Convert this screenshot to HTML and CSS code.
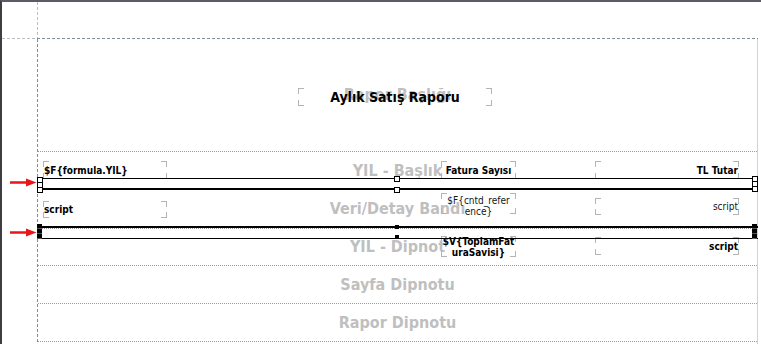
FILE: index.html
```html
<!DOCTYPE html>
<html lang="tr">
<head>
<meta charset="utf-8">
<title>Aylık Satış Raporu</title>
<link rel="stylesheet" href="styles.css">
</head>
<body>
<div class="frame">
  <div class="guide guide-v-out"></div>
  <div class="guide guide-v"></div>
  <div class="guide guide-h-out"></div>
  <div class="guide guide-h"></div>

  <svg class="arrow arrow-a" width="27" height="9" viewBox="0 0 27 9"><path d="M0 3.2H16V0.5L26.5 4.5L16 8.5V5.8H0Z" fill="#e8161b"/></svg>
  <svg class="arrow arrow-b" width="27" height="9" viewBox="0 0 27 9"><path d="M0 3.2H16V0.5L26.5 4.5L16 8.5V5.8H0Z" fill="#e8161b"/></svg>

  <div class="page">
    <section class="band band-title">
      <span class="ghost">Rapor Başlığı</span>
      <div class="field field-title">Aylık Satış Raporu</div>
    </section>

    <section class="band band-r1">
      <span class="ghost">YIL - Başlık</span>
      <div class="field c1 bold r1">$F{formula.YIL}</div>
      <div class="field c2 bold r1 center">Fatura Sayısı</div>
      <div class="field c3 bold r1 right">TL Tutar</div>
    </section>

    <section class="band band-r2">
      <span class="ghost">Veri/Detay Bandı</span>
      <div class="field c1 bold r2a">script</div>
      <div class="field c2 r2b center wrap">$F{cntd_refer<br>ence}</div>
      <div class="field c3 r2c right">script</div>
    </section>

    <section class="band band-r3">
      <span class="ghost">YIL - Dipnot</span>
      <div class="field c2 bold r3b center wrap">$V{ToplamFat<br>uraSavisi}</div>
      <div class="field c3 bold r3c right">script</div>
    </section>

    <section class="band band-plain">
      <span class="ghost">Sayfa Dipnotu</span>
    </section>

    <section class="band band-plain">
      <span class="ghost">Rapor Dipnotu</span>
    </section>

    <div class="sel sel-a">
      <div class="hline thin"></div>
      <div class="hline thick"></div>
      <div class="handles h-left"><i></i><i></i><i></i></div>
      <div class="handle h-mid1"></div>
      <div class="handle h-mid2"></div>
      <div class="handles h-right"><i></i><i></i><i></i></div>
    </div>

    <div class="sel sel-b">
      <div class="hline thick"></div>
      <div class="hline thin"></div>
      <div class="handles filled h-left"><i></i><i></i><i></i></div>
      <div class="dot d1"></div>
      <div class="dot d2"></div>
      <div class="handles filled h-right"><i></i><i></i><i></i></div>
    </div>
  </div>
</div>
</body>
</html>
```

FILE: styles.css
```css
* { box-sizing: border-box; }

html, body {
  margin: 0;
  padding: 0;
  background: #ffffff;
}

body {
  font-family: "DejaVu Sans Condensed", "DejaVu Sans", sans-serif;
  color: #000;
}

.frame {
  position: relative;
  width: 761px;
  height: 344px;
  overflow: hidden;
  border-top: 2px solid #5c5c64;
  border-left: 2px solid #3e3e42;
  padding: 37px 0 0 36px;
  background: #fff;
}

.guide { position: absolute; }

.guide-v-out {
  left: 35px; top: 0; width: 1px; height: 37px;
  background: repeating-linear-gradient(to bottom, #b9bfc3 0 3px, transparent 3px 5px);
}
.guide-v {
  left: 35px; top: 37px; width: 1px; bottom: 0;
  background: repeating-linear-gradient(to bottom, #7c8e98 0 3px, transparent 3px 5px);
}
.guide-h-out {
  left: 0; top: 36px; width: 35px; height: 1px;
  background: repeating-linear-gradient(to right, #b9bfc3 0 3px, transparent 3px 5px);
}
.guide-h {
  left: 35px; top: 36px; width: 721px; height: 1px;
  background: repeating-linear-gradient(to right, #7c8e98 0 3px, transparent 3px 5px);
}

.arrow { position: absolute; left: 8px; }
.arrow-a { top: 176px; }
.arrow-b { top: 226px; }

.page {
  position: relative;
  width: 720px;
  border-right: 1px solid #ccd4da;
  height: 305px;
}

.band {
  position: relative;
  display: grid;
  grid-template-columns: 5px 124px 274px 75px 79px 144px;
  align-items: start;
  border-bottom: 1px dotted #9a9a9a;
}

.band-title { height: 113px; display: block; }
.band-r1 { height: 38px; }
.band-r2 { height: 39px; }
.band-r3 { height: 37px; }
.band-plain { height: 38px; display: block; }

.ghost {
  position: absolute;
  left: 0; right: 0; top: 50%;
  transform: translateY(-50%);
  text-align: center;
  font-family: "DejaVu Sans Condensed", "DejaVu Sans", sans-serif;
  font-weight: bold;
  font-size: 16px;
  color: #bfbfbf;
  line-height: 1;
  white-space: nowrap;
}

.field {
  position: relative;
  font-size: 10px;
  line-height: 11px;
  white-space: nowrap;
  display: flex;
  align-items: center;
  padding: 0 1px;
  background:
    linear-gradient(#b4b4b4, #b4b4b4) left top / 6px 1px no-repeat,
    linear-gradient(#b4b4b4, #b4b4b4) left top / 1px 6px no-repeat,
    linear-gradient(#b4b4b4, #b4b4b4) right top / 6px 1px no-repeat,
    linear-gradient(#b4b4b4, #b4b4b4) right top / 1px 6px no-repeat,
    linear-gradient(#b4b4b4, #b4b4b4) left bottom / 6px 1px no-repeat,
    linear-gradient(#b4b4b4, #b4b4b4) left bottom / 1px 6px no-repeat,
    linear-gradient(#b4b4b4, #b4b4b4) right bottom / 6px 1px no-repeat,
    linear-gradient(#b4b4b4, #b4b4b4) right bottom / 1px 6px no-repeat;
  color: #161616;
}

.bold { font-weight: bold; color: #000; }
.center { justify-content: center; text-align: center; }
.right { justify-content: flex-end; text-align: right; }
.wrap { display: block; padding-top: 0; }

.c1 { grid-column: 2; }
.c2 { grid-column: 4; }
.c3 { grid-column: 6; }

.r1 { margin-top: 9px; height: 18px; }
.r2a { margin-top: 11px; height: 17px; }
.r2b { margin-top: 3px; height: 21px; padding-top: 2px; }
.r2c { margin-top: 8px; height: 17px; }
.r3b { margin-top: 7px; height: 21px; }
.r3c { margin-top: 8px; height: 18px; }

.field-title {
  position: absolute;
  left: 260px;
  top: 49px;
  width: 194px;
  height: 18px;
  justify-content: center;
  font-size: 14px;
  font-weight: bold;
  color: #000;
}

/* selected line elements */
.sel {
  position: absolute;
  left: 0; top: 0; width: 720px;
}
.sel-a { top: 137px; height: 18px; }
.sel-b { top: 186px; height: 16px; }

.hline {
  position: absolute;
  left: 0; right: 0;
  background: #000;
}
.sel-a .thin { top: 2px; height: 1px; }
.sel-a .thick { top: 12px; height: 2px; }
.sel-b .thick { top: 1px; height: 2px; }
.sel-b .thin { top: 13px; height: 1px; }

.handles {
  position: absolute;
  display: flex;
  flex-direction: column;
}
.handles i {
  display: block;
  width: 6px; height: 6px;
  border: 1px solid #000;
  background: #fff;
  margin-top: -1px;
}
.handles i:first-child { margin-top: 0; }
.sel-a .h-left { left: -1px; top: 1px; }
.sel-a .h-right { left: 714px; top: 0; }

.handles.filled i {
  width: 5px; height: 5px;
  background: #000;
  border: 0;
  margin-top: 0;
  box-shadow: inset 0 -1px 0 #555;
}
.sel-b .h-left { left: -1px; top: -1px; }
.sel-b .h-right { left: 714px; top: -1px; }

.handle {
  position: absolute;
  width: 6px; height: 6px;
  border: 1px solid #000;
  background: #fff;
  left: 356px;
}
.h-mid1 { top: 0; }
.h-mid2 { top: 11px; }

.dot {
  position: absolute;
  width: 4px; height: 4px;
  background: #000;
  left: 357px;
}
.d1 { top: 0; }
.d2 { top: 10px; }
```
